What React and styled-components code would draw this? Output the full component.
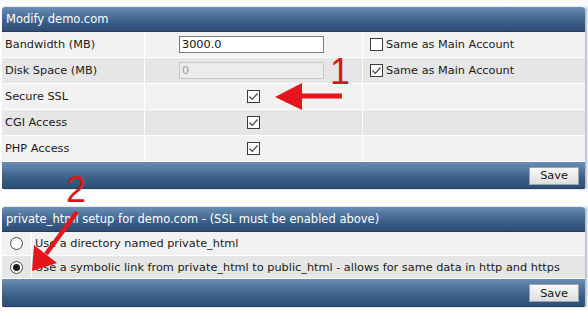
import React from "react";
import styled, { createGlobalStyle } from "styled-components";

const GlobalStyle = createGlobalStyle`
  body {
    margin: 0;
    background: #ffffff;
    font-family: "DejaVu Sans", Verdana, sans-serif;
  }
`;

const Page = styled.div`
  position: relative;
  width: 588px;
  height: 319px;
  overflow: hidden;
  padding: 7px 3px 0 2px;
  box-sizing: border-box;
  background: linear-gradient(#f7f8fa, #ffffff 7px);
  display: flex;
  flex-direction: column;
  gap: 18px;
`;

const Panel = styled.div`
  width: 583px;
  display: flex;
  flex-direction: column;
  box-shadow: 2px 0 2px rgba(40, 60, 90, 0.35);
`;

const Bar = styled.div`
  box-sizing: border-box;
  height: ${({ $h }) => $h}px;
  background: linear-gradient(
    #6a8fb6 0%,
    #4c729c 35%,
    #3a5f89 60%,
    #2d4c72 100%
  );
  border-radius: ${({ $top }) => ($top ? "3px 3px 0 0" : "0 0 2px 2px")};
  box-shadow: inset 0 -1px 0 #243d5c;
`;

const Header = styled(Bar)`
  color: #ffffff;
  font-size: 11.5px;
  line-height: ${({ $h }) => $h}px;
  padding-left: 4px;
  white-space: nowrap;
`;

const Footer = styled(Bar)`
  display: flex;
  justify-content: flex-end;
  align-items: center;
  padding-right: 6px;
`;

const SaveButton = styled.button`
  width: 50px;
  height: 18px;
  padding: 0;
  font-family: "DejaVu Sans", Verdana, sans-serif;
  font-size: 11.3px;
  color: #111;
  background: linear-gradient(#f8f8f8, #dedede);
  border: 1px solid #9aa4ae;
  border-radius: 0;
`;

const Row = styled.div`
  box-sizing: border-box;
  display: grid;
  grid-template-columns: ${({ $cols }) => $cols};
  height: ${({ $h }) => $h}px;
  background: ${({ $alt }) => ($alt ? "#e6e6e6" : "#f2f2f2")};
  border-bottom: 1px solid #ffffff;
  font-size: 11.3px;
  color: #1a1a1a;
`;

const Cell = styled.div`
  display: flex;
  align-items: center;
  justify-content: ${({ $center }) => ($center ? "center" : "flex-start")};
  padding-left: ${({ $pad }) => $pad ?? 3}px;
  border-right: ${({ $last }) => ($last ? "none" : "1px solid #ffffff")};
  white-space: nowrap;
  gap: 3px;
`;

const TextInput = styled.div`
  width: 145px;
  height: 17px;
  box-sizing: border-box;
  border: 1px solid ${({ $disabled }) => ($disabled ? "#c8c8c8" : "#7a7a7a")};
  background: ${({ $disabled }) => ($disabled ? "#ececec" : "#ffffff")};
  color: ${({ $disabled }) => ($disabled ? "#9a9a9a" : "#111")};
  font-size: 11.3px;
  line-height: 15px;
  padding-left: 2px;
  margin-left: 34px;
`;

const Box = styled.span`
  width: 13px;
  height: 13px;
  box-sizing: border-box;
  border: 1px solid #3a3a3a;
  background: #ffffff;
  display: inline-flex;
  align-items: center;
  justify-content: center;
  flex-shrink: 0;
`;

const Radio = styled.span`
  width: 13px;
  height: 13px;
  box-sizing: border-box;
  border: 1px solid #4a4a4a;
  border-radius: 50%;
  background: radial-gradient(circle, #ffffff 60%, #e4e4e4);
  display: inline-flex;
  align-items: center;
  justify-content: center;

  &::after {
    content: "";
    width: 7px;
    height: 7px;
    border-radius: 50%;
    background: ${({ $checked }) => ($checked ? "#1e1e1e" : "transparent")};
  }
`;

const Overlay = styled.svg`
  position: absolute;
  left: 0;
  top: 0;
  pointer-events: none;
`;

const Mark = styled.span`
  position: absolute;
  left: ${({ $x }) => $x}px;
  top: ${({ $y }) => $y}px;
  color: #d9161c;
  font-family: "Liberation Sans", Arial, sans-serif;
  font-size: 36px;
  line-height: 1;
`;

const Checkbox = ({ checked }) => (
  <Box>
    {checked && (
      <svg width="11" height="11" viewBox="0 0 11 11">
        <path d="M1.5 5.5 L4.3 8.3 L9.5 2.5" fill="none" stroke="#444" strokeWidth="1.2" />
      </svg>
    )}
  </Box>
);

const COLS = "143px 218px 1fr";

const rows = [
  { label: "Bandwidth (MB)", input: "3000.0" },
  { label: "Disk Space (MB)", input: "0", disabled: true },
  { label: "Secure SSL", check: true },
  { label: "CGI Access", check: true },
  { label: "PHP Access", check: true },
];

export default function App() {
  return (
    <>
      <GlobalStyle />
      <Page>
        <Panel>
          <Header $h={25} $top>Modify demo.com</Header>
          {rows.map((r, i) => (
            <Row key={r.label} $cols={COLS} $h={26} $alt={i % 2 === 1}>
              <Cell>{r.label}</Cell>
              {r.input !== undefined ? (
                <Cell $pad={0}>
                  <TextInput $disabled={r.disabled}>{r.input}</TextInput>
                </Cell>
              ) : (
                <Cell $center $pad={0}>
                  <Checkbox checked={r.check} />
                </Cell>
              )}
              <Cell $last $pad={7}>
                {i === 0 && (
                  <>
                    <Checkbox />
                    Same as Main Account
                  </>
                )}
                {i === 1 && (
                  <>
                    <Checkbox checked />
                    Same as Main Account
                  </>
                )}
              </Cell>
            </Row>
          ))}
          <Footer $h={27}>
            <SaveButton>Save</SaveButton>
          </Footer>
        </Panel>

        <Panel>
          <Header $h={25} $top>
            private_html setup for demo.com - (SSL must be enabled above)
          </Header>
          <Row $cols="30px 1fr" $h={24}>
            <Cell $center $pad={0}>
              <Radio />
            </Cell>
            <Cell $last $pad={3}>Use a directory named private_html</Cell>
          </Row>
          <Row $cols="30px 1fr" $h={23} $alt>
            <Cell $center $pad={0}>
              <Radio $checked />
            </Cell>
            <Cell $last $pad={3}>
              Use a symbolic link from private_html to public_html - allows for same data in http and https
            </Cell>
          </Row>
          <Footer $h={28}>
            <SaveButton>Save</SaveButton>
          </Footer>
        </Panel>

        <Mark $x={330} $y={54}>1</Mark>
        <Mark $x={66} $y={172}>2</Mark>
        <Overlay width="588" height="319">
          <line x1="342" y1="96" x2="298" y2="96" stroke="#e8141b" strokeWidth="5" />
          <polygon points="275,97 302,83 302,110" fill="#e8141b" />
          <line x1="77" y1="212" x2="46" y2="254" stroke="#e8141b" strokeWidth="4.5" />
          <polygon points="32,271 34,245 57,263" fill="#e8141b" />
        </Overlay>
      </Page>
    </>
  );
}
